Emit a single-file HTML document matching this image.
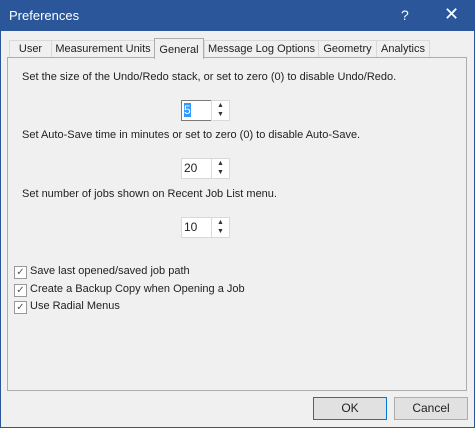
<!DOCTYPE html><html><head><style>
body{margin:0;width:475px;height:428px;overflow:hidden;font-family:"Liberation Sans",sans-serif;font-size:11px;color:#222}
.win{position:absolute;left:0;top:0;width:473px;height:426px;border:1px solid #2b579a;background:#f0f0f0}
.title{position:absolute;left:0;top:0;width:475px;height:31px;background:#2b579a;color:#fff}
.a{position:absolute;white-space:nowrap}
.tab{position:absolute;top:40px;height:16px;border:1px solid #d9d9d9;border-bottom:none;background:#f0f0f0;text-align:center;line-height:16px;white-space:nowrap;overflow:hidden}
.panel{position:absolute;left:7px;top:57px;width:458px;height:332px;border:1px solid #adadad;background:#f0f0f0}
.box{position:absolute;width:28px;height:19px;border:1px solid #d9d9d9;background:#fff;line-height:19px;padding-left:2px;box-sizing:content-box;font-size:12px}
.spin{position:absolute;width:17px;height:19px;border:1px solid #d9d9d9;background:#fff;font-size:7px;line-height:9px;text-align:center;color:#333}
.cb{position:absolute;left:14px;width:11px;height:11px;border:1px solid #999;background:#fff;font-size:10px;line-height:11px;text-align:center;color:#555}
.btn{position:absolute;top:397px;width:72px;height:21px;border:1px solid #adadad;background:#e1e1e1;text-align:center;line-height:21px;font-size:12px}
</style></head><body>
<div class="win"></div>
<div class="title"><span class="a" style="left:9px;top:8px;font-size:13px">Preferences</span><span class="a" style="left:401px;top:7px;font-size:14px">?</span><span class="a" style="left:444px;top:4px;font-size:18px">✕</span></div>
<div class="panel"></div>
<div class="tab" style="left:9px;width:41px">User</div>
<div class="tab" style="left:51px;width:102px">Measurement Units</div>
<div class="tab" style="left:204px;width:113px">Message Log Options</div>
<div class="tab" style="left:318px;width:57px">Geometry</div>
<div class="tab" style="left:376px;width:52px">Analytics</div>
<div class="tab" style="left:154px;top:38px;height:20px;width:48px;border-color:#adadad;line-height:22px;z-index:2;background:#f0f0f0">General</div>
<div class="a" style="left:22px;top:71px">Set the size of the Undo/Redo stack, or set to zero (0) to disable Undo/Redo.</div>
<div class="box" style="left:181px;top:100px;border-color:#7a7a7a"><span style="background:#3399ff;color:#fff">5</span></div>
<div class="spin" style="left:211px;top:100px">▲<br>▼</div>
<div class="a" style="left:22px;top:129px">Set Auto-Save time in minutes or set to zero (0) to disable Auto-Save.</div>
<div class="box" style="left:181px;top:158px">20</div>
<div class="spin" style="left:211px;top:158px">▲<br>▼</div>
<div class="a" style="left:22px;top:188px">Set number of jobs shown on Recent Job List menu.</div>
<div class="box" style="left:181px;top:217px">10</div>
<div class="spin" style="left:211px;top:217px">▲<br>▼</div>
<div class="cb" style="top:266px">✓</div><div class="a" style="left:30px;top:265px">Save last opened/saved job path</div>
<div class="cb" style="top:284px">✓</div><div class="a" style="left:30px;top:283px">Create a Backup Copy when Opening a Job</div>
<div class="cb" style="top:301px">✓</div><div class="a" style="left:30px;top:300px">Use Radial Menus</div>
<div class="btn" style="left:313px;border-color:#0078d7">OK</div>
<div class="btn" style="left:394px">Cancel</div>
</body></html>
